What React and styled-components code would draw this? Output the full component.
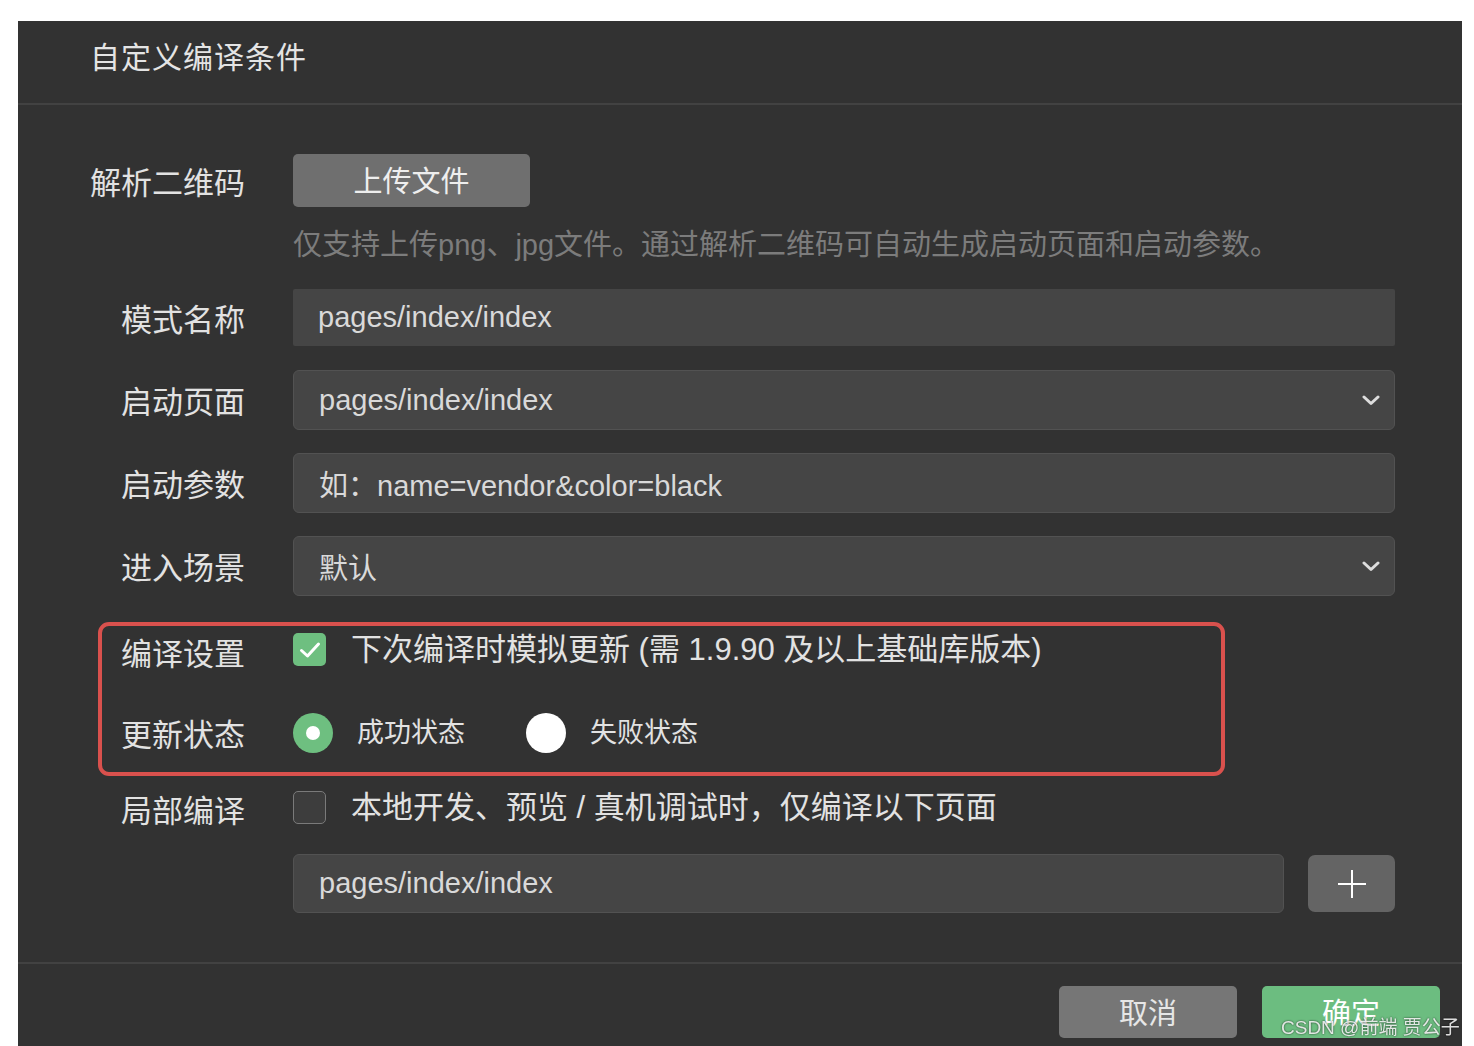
import React from "react";
import styled, { createGlobalStyle } from "styled-components";

const FONT = `"Liberation Sans", "Noto Sans CJK SC", sans-serif`;

const GlobalStyle = createGlobalStyle`
  html, body {
    margin: 0;
    padding: 0;
    background: #ffffff;
    font-family: ${FONT};
    overflow: hidden;
  }
`;

const Page = styled.div`
  padding: 21px 12px 0 18px;
`;

const Dialog = styled.div`
  position: relative;
  width: 1444px;
  background-color: #323232;
  color: #e0e0e0;
`;

const Header = styled.div`
  height: 84px;
  box-sizing: border-box;
  display: flex;
  align-items: center;
  padding: 0 0 8px 72px;
  border-bottom: 2px solid #424242;
  font-size: 30px;
  line-height: 1;
  color: #e4e4e4;
  letter-spacing: 1px;
`;

const Body = styled.div`
  padding: 49px 67px 49px 70px;
  display: flex;
  flex-direction: column;
`;

const Row = styled.div`
  display: grid;
  grid-template-columns: 157px 1fr;
  column-gap: 48px;
  align-items: ${(p) => p.$align || "center"};
  margin-top: ${(p) => p.$top || 0}px;
`;

const Label = styled.div`
  text-align: right;
  font-size: 31px;
  line-height: 1;
  color: #e2e2e2;
  white-space: nowrap;
  padding-top: ${(p) => (p.$offset === undefined ? 5 : p.$offset)}px;
`;

const UploadButton = styled.button`
  width: 237px;
  height: 53px;
  border: none;
  border-radius: 5px;
  background-color: #6f6f6f;
  color: #eeeeee;
  font-family: ${FONT};
  font-size: 29px;
  line-height: 1;
  padding: 4px 0 0;
  cursor: pointer;
`;

const Hint = styled.div`
  margin-top: 23px;
  font-size: 29px;
  line-height: 30px;
  color: #7c7c7c;
  white-space: nowrap;
`;

const Field = styled.div`
  height: ${(p) => p.$height || 60}px;
  box-sizing: border-box;
  display: flex;
  align-items: center;
  justify-content: space-between;
  padding: 0 14px 0 25px;
  background-color: #454545;
  border: ${(p) => (p.$plain ? "none" : "1.5px solid #525252")};
  border-radius: ${(p) => (p.$plain ? 2 : 6)}px;
  font-size: 29px;
  color: #d9d9d9;
  flex: 1;
`;

const Chevron = () => (
  <svg width="18" height="12" viewBox="0 0 18 12" fill="none">
    <path d="M2 3 L9 9.5 L16 3" stroke="#dddddd" strokeWidth="3" strokeLinecap="round" strokeLinejoin="round" />
  </svg>
);

const Highlight = styled.div`
  position: relative;
  margin-top: 33px;
`;

const RedBox = styled.div`
  position: absolute;
  left: 10px;
  top: -7px;
  width: 1127px;
  height: 154px;
  box-sizing: border-box;
  border: 4px solid #d9514d;
  border-radius: 11px;
  pointer-events: none;
`;

const Check = styled.div`
  width: 33px;
  height: 33px;
  box-sizing: border-box;
  border-radius: 5px;
  display: flex;
  align-items: center;
  justify-content: center;
  background-color: ${(p) => (p.$checked ? "#6ebf80" : "#3d3d3d")};
  border: ${(p) => (p.$checked ? "none" : "1.5px solid #7a7a7a")};
  flex-shrink: 0;
`;

const OptionLine = styled.div`
  display: flex;
  align-items: center;
  gap: 25px;
  height: 40px;
  font-size: 31px;
  line-height: 1;
  color: #e2e2e2;
  white-space: nowrap;
`;

const RadioGroup = styled.div`
  display: flex;
  align-items: center;
  height: 40px;
`;

const RadioItem = styled.label`
  display: flex;
  align-items: center;
  gap: 24px;
  margin-right: 61px;
  font-size: 27px;
  line-height: 1;
  color: #e2e2e2;
`;

const RadioCircle = styled.span`
  width: 40px;
  height: 40px;
  border-radius: 50%;
  display: flex;
  align-items: center;
  justify-content: center;
  background-color: ${(p) => (p.$checked ? "#6ebf80" : "#ffffff")};

  &::after {
    content: "";
    width: 14px;
    height: 14px;
    border-radius: 50%;
    background-color: #ffffff;
    display: ${(p) => (p.$checked ? "block" : "none")};
  }
`;

const PageInputRow = styled.div`
  display: flex;
  gap: 24px;
  align-items: center;
`;

const PlusButton = styled.button`
  width: 87px;
  height: 57px;
  border: none;
  border-radius: 7px;
  background-color: #646464;
  display: flex;
  align-items: center;
  justify-content: center;
  flex-shrink: 0;
`;

const Footer = styled.div`
  border-top: 2px solid #424242;
  padding: 22px 22px 20px 0;
  display: flex;
  justify-content: flex-end;
  gap: 25px;
`;

const FooterButton = styled.button`
  width: 178px;
  height: 52px;
  border: none;
  border-radius: 5px;
  font-family: ${FONT};
  font-size: 29px;
  line-height: 1;
  padding: 5px 0 0;
  color: ${(p) => (p.$primary ? "#ffffff" : "#e6e6e6")};
  background-color: ${(p) => (p.$primary ? "#6cbd80" : "#767676")};
  cursor: pointer;
`;

const Watermark = styled.div`
  position: fixed;
  left: 1281px;
  top: 1012px;
  font-size: 19px;
  color: rgba(255, 255, 255, 0.85);
  text-shadow: 0 0 2px rgba(0, 0, 0, 0.8);
  white-space: nowrap;
  pointer-events: none;
`;

const App = () => {
  return (
    <>
      <GlobalStyle />
      <Page>
        <Dialog>
          <Header>自定义编译条件</Header>
          <Body>
            <Row $align="start">
              <Label $offset={14}>解析二维码</Label>
              <div>
                <UploadButton>上传文件</UploadButton>
                <Hint>仅支持上传png、jpg文件。通过解析二维码可自动生成启动页面和启动参数。</Hint>
              </div>
            </Row>

            <Row $top={29}>
              <Label>模式名称</Label>
              <Field $plain $height={57}>pages/index/index</Field>
            </Row>
            <Row $top={24}>
              <Label>启动页面</Label>
              <Field>
                <span>pages/index/index</span>
                <Chevron />
              </Field>
            </Row>
            <Row $top={23}>
              <Label>启动参数</Label>
              <Field>如：name=vendor&amp;color=black</Field>
            </Row>
            <Row $top={23}>
              <Label>进入场景</Label>
              <Field>
                <span>默认</span>
                <Chevron />
              </Field>
            </Row>

            <Highlight>
              <RedBox />
              <Row>
                <Label $offset={10}>编译设置</Label>
                <OptionLine>
                  <Check $checked>
                    <svg width="22" height="18" viewBox="0 0 22 18" fill="none">
                      <path d="M2.5 9.5 L8.5 15 L19.5 3" stroke="#ffffff" strokeWidth="3" strokeLinecap="round" strokeLinejoin="round" />
                    </svg>
                  </Check>
                  <span>下次编译时模拟更新 (需 1.9.90 及以上基础库版本)</span>
                </OptionLine>
              </Row>
              <Row $top={43}>
                <Label>更新状态</Label>
                <RadioGroup>
                  <RadioItem>
                    <RadioCircle $checked />
                    成功状态
                  </RadioItem>
                  <RadioItem>
                    <RadioCircle />
                    失败状态
                  </RadioItem>
                </RadioGroup>
              </Row>
            </Highlight>

            <Row $top={34}>
              <Label $offset={9}>局部编译</Label>
              <OptionLine>
                <Check />
                <span>本地开发、预览 / 真机调试时，仅编译以下页面</span>
              </OptionLine>
            </Row>
            <Row $top={27}>
              <div />
              <PageInputRow>
                <Field $height={59}>pages/index/index</Field>
                <PlusButton>
                  <svg width="32" height="32" viewBox="0 0 32 32">
                    <path d="M16 2 V30 M2 16 H30" stroke="#ffffff" strokeWidth="2" />
                  </svg>
                </PlusButton>
              </PageInputRow>
            </Row>
          </Body>
          <Footer>
            <FooterButton>取消</FooterButton>
            <FooterButton $primary>确定</FooterButton>
          </Footer>
        </Dialog>
      </Page>
      <Watermark>CSDN @前端 贾公子</Watermark>
    </>
  );
};

export default App;
